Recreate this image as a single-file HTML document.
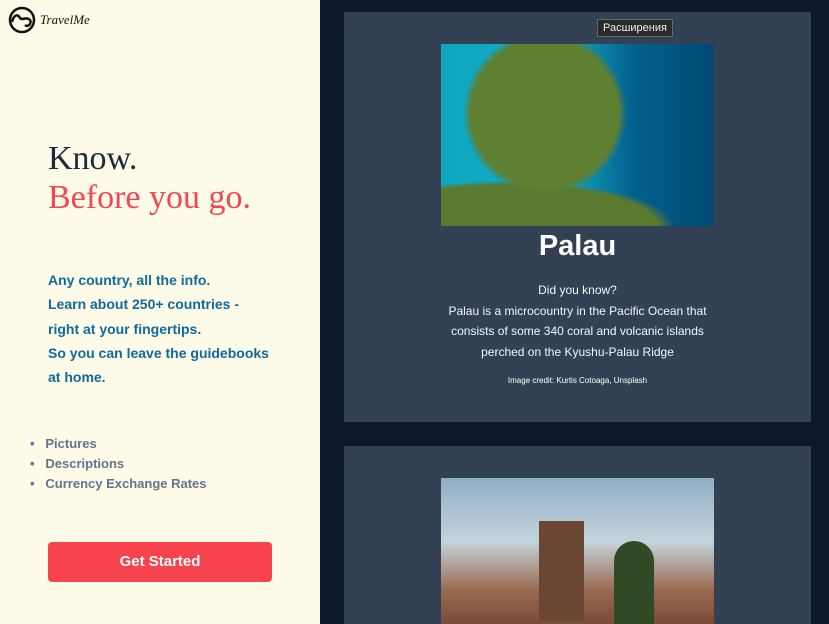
<!DOCTYPE html>
<html style="width:829px;height:624px;overflow:hidden"><head><meta charset="utf-8"><style>
*{margin:0;padding:0;box-sizing:border-box}
body{width:829px;height:624px;overflow:hidden;font-family:"Liberation Sans",sans-serif;position:relative;background:#0f172a}
.left{position:absolute;left:0;top:0;width:320px;height:624px;background:#fefbe8}
.card{position:absolute;left:344px;width:467px;background:#334155;overflow:hidden}
.t{position:absolute;white-space:nowrap}
</style></head><body>
<div class="left">
<svg style="position:absolute;left:8px;top:6px" width="28" height="28" viewBox="0 0 28 28"><circle cx="14" cy="14" r="12" fill="none" stroke="#111" stroke-width="2.5"/><path d="M4 16 C6 8 10 8 12 12 C14 15 18 10 22 14 C24 17 20 22 17 19" fill="none" stroke="#111" stroke-width="2.5"/></svg>
<div class="t" style="left:40px;top:12px;font-size:13px;font-style:italic;font-family:'Liberation Serif',serif;color:#111">TravelMe</div>
<div class="t" style="left:48px;top:140px;font-size:34px;color:#1e293b;font-family:'Liberation Serif',serif">Know.</div>
<div class="t" style="left:48px;top:179px;font-size:34px;color:#f24650;font-family:'Liberation Serif',serif">Before you go.</div>
<div class="t" style="left:48px;top:268px;font-size:14px;line-height:24.3px;color:#0f6aa0;font-weight:bold">Any country, all the info.<br>Learn about 250+ countries -<br>right at your fingertips.<br>So you can leave the guidebooks<br>at home.</div>
<ul style="position:absolute;left:30px;top:434px;font-size:13px;line-height:20px;color:#64748b;font-weight:bold;list-style:none">
<li>•&nbsp;&nbsp;&nbsp;Pictures</li><li>•&nbsp;&nbsp;&nbsp;Descriptions</li><li>•&nbsp;&nbsp;&nbsp;Currency Exchange Rates</li></ul>
<div style="position:absolute;left:48px;top:542px;width:224px;height:40px;background:#f7434d;border-radius:4px;color:#fff;font-weight:bold;font-size:15px;text-align:center;line-height:40px">Get Started</div>
</div>
<div class="card" style="top:12px;height:410px">
<div style="position:absolute;left:97px;top:32px;width:273px;height:182px;background:radial-gradient(ellipse 30% 45% at 38% 38%,#5f7f32 90%,transparent 100%),radial-gradient(ellipse 60% 25% at 25% 100%,#5a7a30 90%,transparent 100%),linear-gradient(90deg,#0fa7c0 0%,#11a9c4 45%,#03618c 70%,#024a72 100%)"></div>
<div class="t" style="left:0;width:467px;text-align:center;top:218px;font-size:29px;font-weight:bold;color:#fff">Palau</div>
<div class="t" style="left:0;width:467px;text-align:center;top:268px;font-size:12px;line-height:20.5px;color:#f1f5f9">Did you know?<br>Palau is a microcountry in the Pacific Ocean that<br>consists of some 340 coral and volcanic islands<br>perched on the Kyushu-Palau Ridge</div>
<div class="t" style="left:0;width:467px;text-align:center;top:364px;font-size:8px;color:#fff">Image credit: Kurtis Cotoaga, Unsplash</div>
</div>
<div class="t" style="left:597px;top:19px;padding:2px 5px;background:#2a2a2a;border:1px solid #666;color:#eee;font-size:11px">Расширения</div>
<div class="card" style="top:446px;height:178px">
<div style="position:absolute;left:97px;top:32px;width:273px;height:160px;background:linear-gradient(180deg,#8fb0c6 0%,#c4d3dc 40%,#9a6a50 70%,#6b3e2e 100%)"></div>
<div style="position:absolute;left:195px;top:75px;width:45px;height:100px;background:#6b4633"></div>
<div style="position:absolute;left:270px;top:95px;width:40px;height:90px;background:#2f4a25;border-radius:20px 20px 0 0"></div>
</div>
</body></html>
